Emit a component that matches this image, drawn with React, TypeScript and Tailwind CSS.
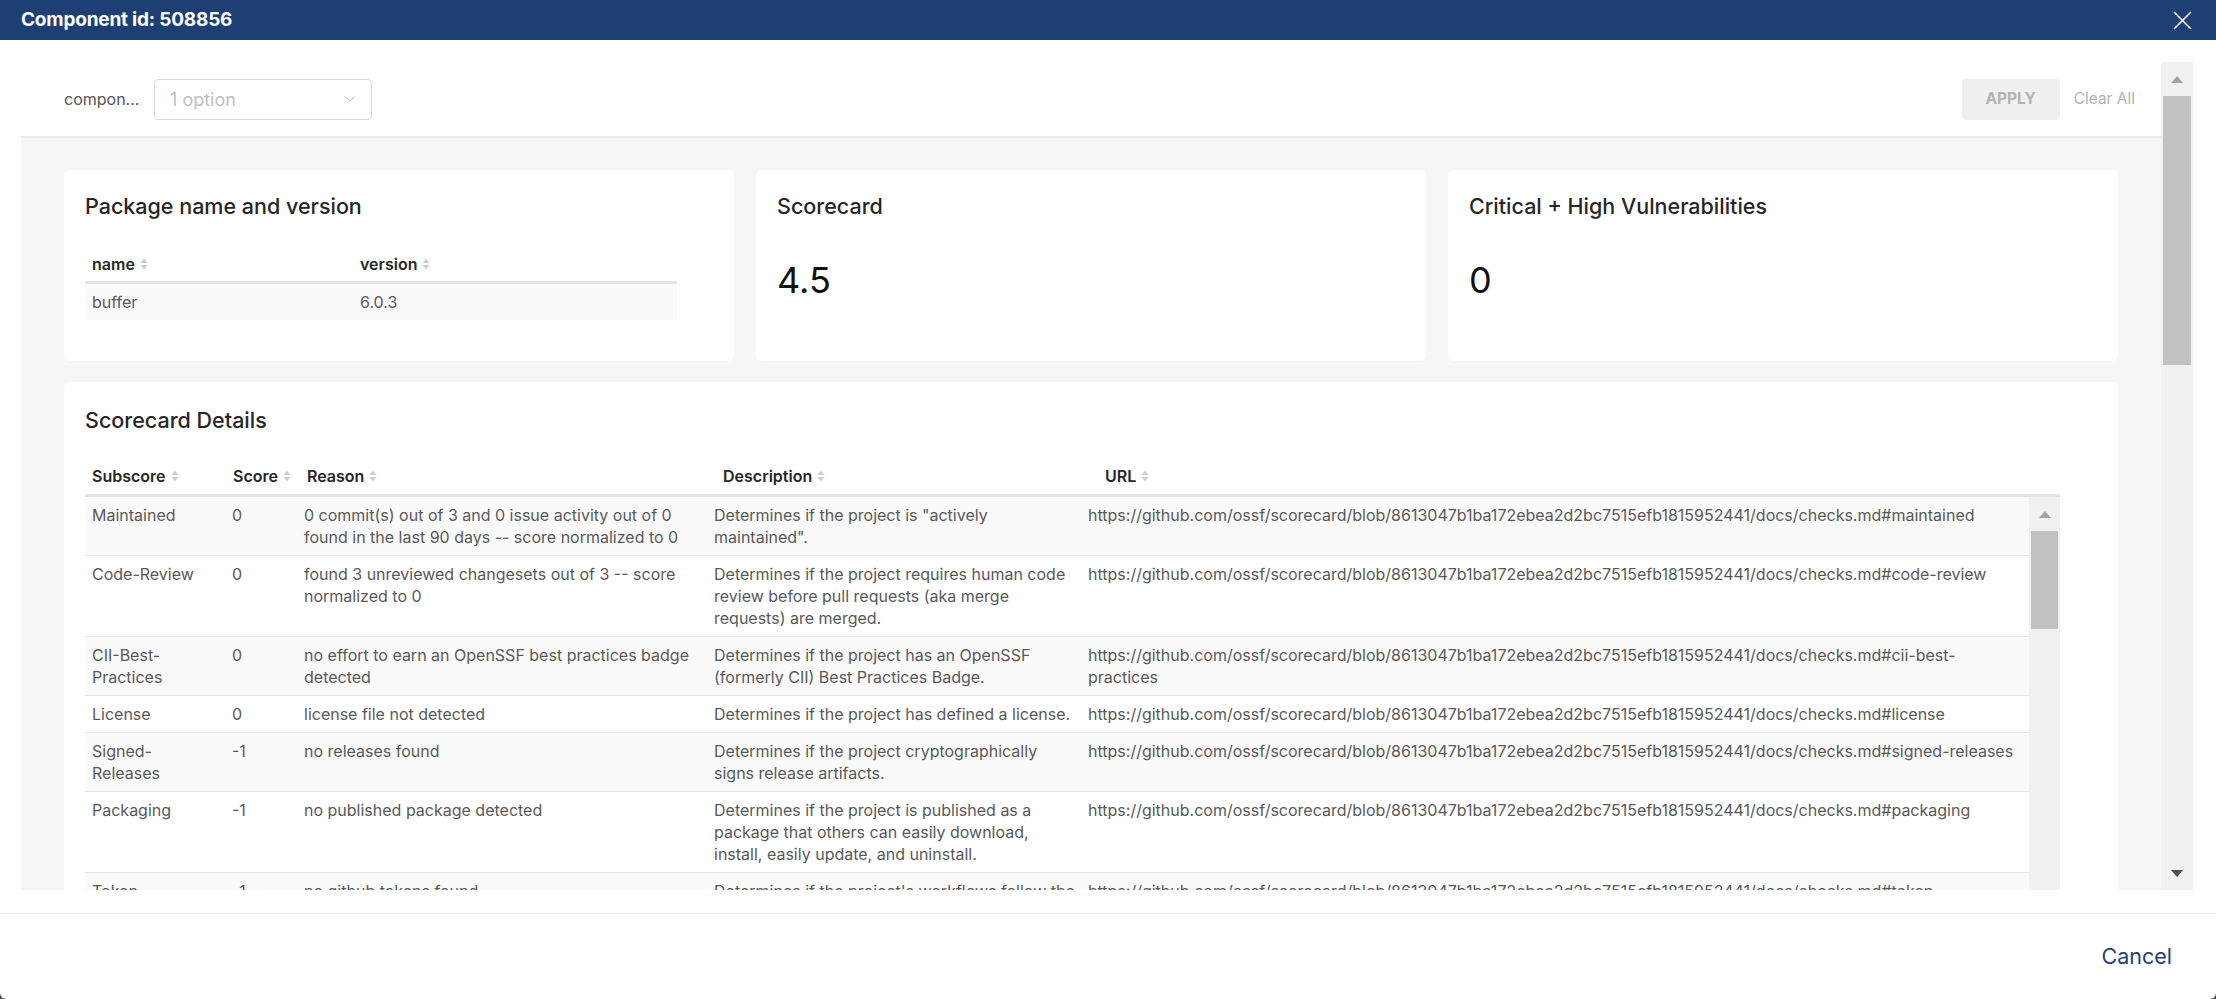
import { ChevronDown } from "lucide-react";

const URL_BASE =
  "https://github.com/ossf/scorecard/blob/8613047b1ba172ebea2d2bc7515efb1815952441/docs/checks.md#";

interface Check {
  name: string[];
  score: string;
  reason: string[];
  description: string[];
  url: string[];
}

const checks: Check[] = [
  {
    name: ["Maintained"],
    score: "0",
    reason: [
      "0 commit(s) out of 3 and 0 issue activity out of 0",
      "found in the last 90 days -- score normalized to 0",
    ],
    description: ['Determines if the project is "actively', 'maintained".'],
    url: [URL_BASE + "maintained"],
  },
  {
    name: ["Code-Review"],
    score: "0",
    reason: ["found 3 unreviewed changesets out of 3 -- score", "normalized to 0"],
    description: [
      "Determines if the project requires human code",
      "review before pull requests (aka merge",
      "requests) are merged.",
    ],
    url: [URL_BASE + "code-review"],
  },
  {
    name: ["CII-Best-", "Practices"],
    score: "0",
    reason: ["no effort to earn an OpenSSF best practices badge", "detected"],
    description: ["Determines if the project has an OpenSSF", "(formerly CII) Best Practices Badge."],
    url: [URL_BASE + "cii-best-", "practices"],
  },
  {
    name: ["License"],
    score: "0",
    reason: ["license file not detected"],
    description: ["Determines if the project has defined a license."],
    url: [URL_BASE + "license"],
  },
  {
    name: ["Signed-", "Releases"],
    score: "-1",
    reason: ["no releases found"],
    description: ["Determines if the project cryptographically", "signs release artifacts."],
    url: [URL_BASE + "signed-releases"],
  },
  {
    name: ["Packaging"],
    score: "-1",
    reason: ["no published package detected"],
    description: [
      "Determines if the project is published as a",
      "package that others can easily download,",
      "install, easily update, and uninstall.",
    ],
    url: [URL_BASE + "packaging"],
  },
  {
    name: ["Token-", "Permissions"],
    score: "-1",
    reason: ["no github tokens found"],
    description: [
      "Determines if the project's workflows follow the",
      "principle of least privilege.",
    ],
    url: [URL_BASE + "token-", "permissions"],
  },
  {
    name: ["Binary-", "Artifacts"],
    score: "10",
    reason: ["no binaries found in the repo"],
    description: ["Determines if the project has generated", "executable (binary) artifacts in the source", "repository."],
    url: [URL_BASE + "binary-", "artifacts"],
  },
];

const SortIcon = () => (
  <svg width="8" height="12" viewBox="0 0 8 12" className="ml-[5px] shrink-0">
    <path d="M4 0.5 L7.5 5 H0.5 Z" fill="#cccccc" />
    <path d="M4 11.5 L7.5 7 H0.5 Z" fill="#cccccc" />
  </svg>
);

const Arrow = ({ up, color }: { up: boolean; color: string }) => (
  <svg width="12" height="7" viewBox="0 0 12 7">
    {up ? <path d="M6 0 L12 7 H0 Z" fill={color} /> : <path d="M6 7 L12 0 H0 Z" fill={color} />}
  </svg>
);

const ScrollTrack = ({
  thumb,
  downColor,
  className,
}: {
  thumb: string;
  downColor: string;
  className: string;
}) => (
  <div className={`flex flex-col bg-[#f1f1f1] ${className}`}>
    <div className="h-[34px] flex items-center justify-center shrink-0">
      <Arrow up color="#a3a3a3" />
    </div>
    <div className={`mx-[2px] bg-[#c1c1c1] shrink-0 ${thumb}`} />
    <div className="flex-1" />
    <div className="h-[34px] flex items-center justify-center shrink-0">
      <Arrow up={false} color={downColor} />
    </div>
  </div>
);

const Lines = ({ lines }: { lines: string[] }) => (
  <>
    {lines.map((l, i) => (
      <div key={i} className="whitespace-nowrap">
        {l}
      </div>
    ))}
  </>
);

export default function App() {
  return (
    <div className="w-[2216px] h-[999px] bg-[#4a4a4a] font-['Inter',sans-serif] overflow-hidden">
      <div className="w-full h-full bg-white flex flex-col rounded-b-[6px] overflow-hidden">
        {/* Title bar */}
        <div className="h-[40px] bg-[#1e3f74] flex items-center justify-between pl-[21px] pr-[24px] shrink-0">
          <span className="text-white text-[19px] font-bold tracking-[-0.2px]">Component id: 508856</span>
          <svg width="19" height="19" viewBox="0 0 19 19">
            <path d="M1 1 L18 18 M18 1 L1 18" stroke="white" strokeWidth="1.6" />
          </svg>
        </div>

        {/* Scrollable body */}
        <div className="mt-[22px] ml-[21px] mr-[23px] h-[828px] flex shrink-0">
          <div className="flex-1 flex flex-col overflow-hidden">
            {/* Filter bar */}
            <div className="h-[76px] shrink-0 bg-white border-b-2 border-[#ececec] flex items-center pl-[43px] pr-[26px]">
              <span className="text-[16px] text-[#555555] w-[76px]">compon...</span>
              <div className="ml-[14px] w-[218px] h-[41px] border border-[#d9d9d9] rounded-[4px] flex items-center justify-between pl-[15px] pr-[12px]">
                <span className="text-[18px] text-[#bfbfbf]">1 option</span>
                <ChevronDown size={18} strokeWidth={1.3} color="#b5b5b5" />
              </div>
              <div className="flex-1" />
              <div className="w-[98px] h-[41px] rounded-[4px] bg-[#f0f0f0] flex items-center justify-center text-[15.5px] font-bold text-[#b3b3b3]">
                APPLY
              </div>
              <span className="ml-[14px] text-[15.5px] text-[#b3b3b3]">Clear All</span>
            </div>

            {/* Grey content */}
            <div className="flex-1 bg-[#f6f6f6] px-[43px] pt-[32px] flex flex-col gap-[21px]">
              <div className="grid grid-cols-3 gap-[22px] h-[191px] shrink-0">
                <div className="bg-white rounded-[6px] px-[21px] pt-[22px]">
                  <div className="text-[21.5px] leading-[28px] font-medium text-[#262626]">Package name and version</div>
                  <div className="w-[592px] mt-[27px]">
                    <div className="h-[37px] flex items-center border-b-[3px] border-[#e3e3e3] text-[16px] font-semibold text-[#262626]">
                      <div className="w-[268px] px-[7px] flex items-center">
                        name
                        <SortIcon />
                      </div>
                      <div className="px-[7px] flex items-center">
                        version
                        <SortIcon />
                      </div>
                    </div>
                    <div className="h-[36px] flex items-center bg-[#fafafa] text-[16px] text-[#595959]">
                      <div className="w-[268px] px-[7px]">buffer</div>
                      <div className="px-[7px]">6.0.3</div>
                    </div>
                  </div>
                </div>

                <div className="bg-white rounded-[6px] px-[21px] pt-[22px]">
                  <div className="text-[21.5px] leading-[28px] font-medium text-[#262626]">Scorecard</div>
                  <div className="mt-[38px] text-[36px] leading-[44px] text-[#111111]">4.5</div>
                </div>

                <div className="bg-white rounded-[6px] px-[21px] pt-[22px]">
                  <div className="text-[21.5px] leading-[28px] font-medium text-[#262626]">Critical + High Vulnerabilities</div>
                  <div className="mt-[38px] text-[36px] leading-[44px] text-[#111111]">0</div>
                </div>
              </div>

              {/* Scorecard details */}
              <div className="bg-white rounded-[6px] px-[21px] pt-[24px] h-[700px] shrink-0">
                <div className="text-[21.5px] leading-[28px] font-medium text-[#262626]">Scorecard Details</div>
                <div className="w-[1975px] mt-[24px]">
                  <div className="h-[39px] grid grid-cols-[141px_74px_416px_382px_1fr] items-center border-b-[3px] border-[#e3e3e3] text-[16px] font-semibold text-[#262626]">
                    {["Subscore", "Score", "Reason", "Description", "URL"].map((h) => (
                      <div key={h} className="px-[7px] flex items-center">
                        {h}
                        <SortIcon />
                      </div>
                    ))}
                  </div>
                  <div className="flex h-[560px]">
                    <div className="flex-1 overflow-hidden">
                      {checks.map((c, i) => (
                        <div
                          key={i}
                          className={`grid grid-cols-[140px_72px_410px_374px_1fr] border-b border-[#e8e8e8] text-[16px] leading-[22px] text-[#595959] ${
                            i % 2 === 0 ? "bg-[#fafafa]" : "bg-white"
                          }`}
                        >
                          <div className="px-[7px] py-[7px]">
                            <Lines lines={c.name} />
                          </div>
                          <div className="px-[7px] py-[7px]">{c.score}</div>
                          <div className="px-[7px] py-[7px]">
                            <Lines lines={c.reason} />
                          </div>
                          <div className="px-[7px] py-[7px]">
                            <Lines lines={c.description} />
                          </div>
                          <div className="px-[7px] py-[7px] overflow-hidden">
                            <Lines lines={c.url} />
                          </div>
                        </div>
                      ))}
                    </div>
                    <ScrollTrack thumb="h-[98px]" downColor="#505050" className="w-[31px] shrink-0" />
                  </div>
                </div>
              </div>
            </div>
          </div>
          <ScrollTrack thumb="h-[269px]" downColor="#505050" className="w-[32px] shrink-0" />
        </div>

        {/* Footer */}
        <div className="mt-[23px] flex-1 border-t border-[#ededed] flex items-center justify-end pr-[44px]">
          <span className="text-[21.5px] text-[#1e3f74]">Cancel</span>
        </div>
      </div>
    </div>
  );
}
